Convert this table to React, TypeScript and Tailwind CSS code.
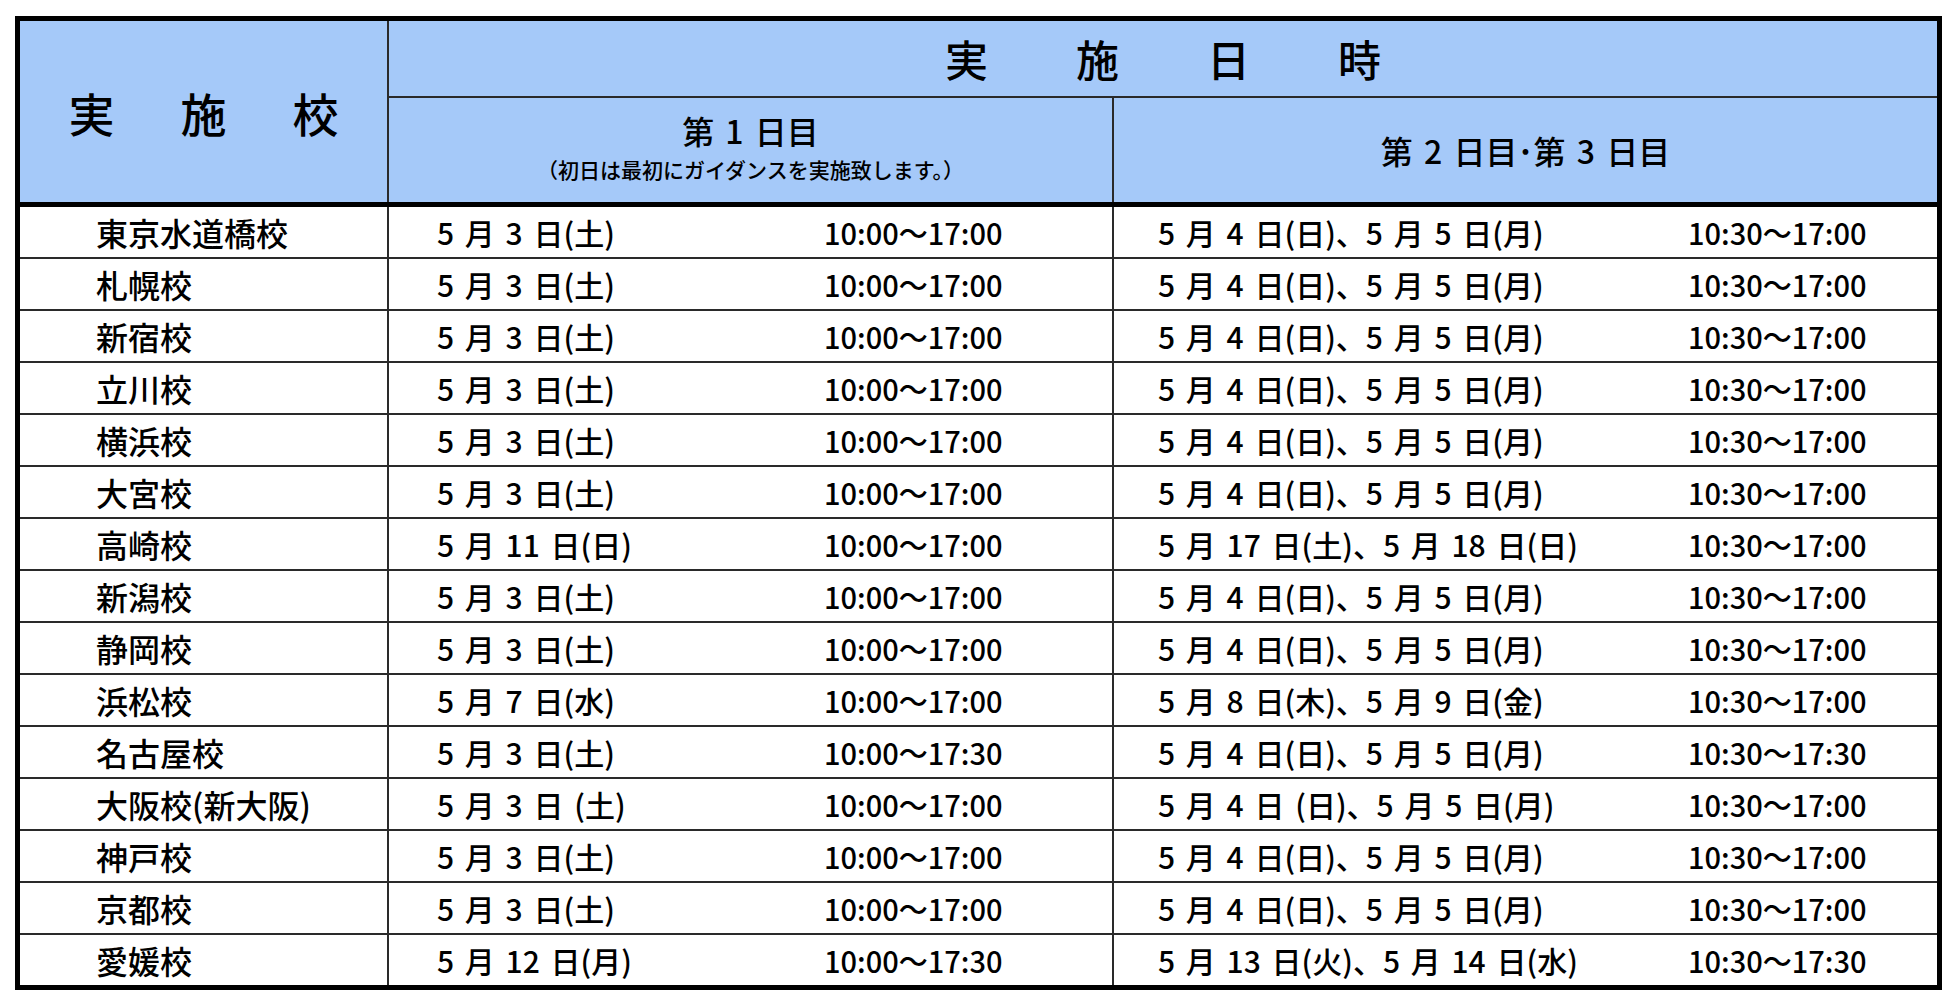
const rows = [
  ["東京水道橋校", "5 月 3 日(土)", "10:00〜17:00", "5 月 4 日(日)、5 月 5 日(月)", "10:30〜17:00"],
  ["札幌校", "5 月 3 日(土)", "10:00〜17:00", "5 月 4 日(日)、5 月 5 日(月)", "10:30〜17:00"],
  ["新宿校", "5 月 3 日(土)", "10:00〜17:00", "5 月 4 日(日)、5 月 5 日(月)", "10:30〜17:00"],
  ["立川校", "5 月 3 日(土)", "10:00〜17:00", "5 月 4 日(日)、5 月 5 日(月)", "10:30〜17:00"],
  ["横浜校", "5 月 3 日(土)", "10:00〜17:00", "5 月 4 日(日)、5 月 5 日(月)", "10:30〜17:00"],
  ["大宮校", "5 月 3 日(土)", "10:00〜17:00", "5 月 4 日(日)、5 月 5 日(月)", "10:30〜17:00"],
  ["高崎校", "5 月 11 日(日)", "10:00〜17:00", "5 月 17 日(土)、5 月 18 日(日)", "10:30〜17:00"],
  ["新潟校", "5 月 3 日(土)", "10:00〜17:00", "5 月 4 日(日)、5 月 5 日(月)", "10:30〜17:00"],
  ["静岡校", "5 月 3 日(土)", "10:00〜17:00", "5 月 4 日(日)、5 月 5 日(月)", "10:30〜17:00"],
  ["浜松校", "5 月 7 日(水)", "10:00〜17:00", "5 月 8 日(木)、5 月 9 日(金)", "10:30〜17:00"],
  ["名古屋校", "5 月 3 日(土)", "10:00〜17:30", "5 月 4 日(日)、5 月 5 日(月)", "10:30〜17:30"],
  ["大阪校(新大阪)", "5 月 3 日 (土)", "10:00〜17:00", "5 月 4 日 (日)、5 月 5 日(月)", "10:30〜17:00"],
  ["神戸校", "5 月 3 日(土)", "10:00〜17:00", "5 月 4 日(日)、5 月 5 日(月)", "10:30〜17:00"],
  ["京都校", "5 月 3 日(土)", "10:00〜17:00", "5 月 4 日(日)、5 月 5 日(月)", "10:30〜17:00"],
  ["愛媛校", "5 月 12 日(月)", "10:00〜17:30", "5 月 13 日(火)、5 月 14 日(水)", "10:30〜17:30"],
];

const line = "border-[#2a2a2a]";

const App = () => {
  return (
    <div className="w-[1956px] h-[1002px] bg-white pt-[16px] pl-[15px] font-['Noto_Sans_CJK_JP',sans-serif] font-medium text-black">
      <div className="w-[1927px] border-[5px] border-black">
        {/* header */}
        <div className="flex h-[186px] bg-[#a5c9f9] border-b-[5px] border-black">
          <div className={`w-[369px] shrink-0 border-r-2 ${line} flex items-center justify-center gap-[66px] text-[46px] leading-none`}>
            <span>実</span>
            <span>施</span>
            <span>校</span>
          </div>
          <div className="flex-1 flex flex-col">
            <div className={`h-[77px] border-b-2 ${line} flex items-center justify-center gap-[88px] text-[43px] leading-none`}>
              <span>実</span>
              <span>施</span>
              <span>日</span>
              <span>時</span>
            </div>
            <div className="flex-1 flex">
              <div className={`w-[725px] shrink-0 border-r-2 ${line} flex flex-col items-center justify-center pb-[6px]`}>
                <div className="text-[32px] leading-none [word-spacing:4px]">第 1 日目</div>
                <div className="text-[21px] leading-none mt-[13px]">（初日は最初にガイダンスを実施致します。）</div>
              </div>
              <div className="flex-1 flex items-center justify-center text-[32px] leading-none [word-spacing:4px]">第 2 日目･第 3 日目</div>
            </div>
          </div>
        </div>
        {/* body */}
        {rows.map((r, i) => (
          <div
            key={r[0]}
            className={`flex text-[30px] leading-none whitespace-nowrap ${i < rows.length - 1 ? `h-[52px] border-b-2 ${line}` : "h-[50px]"}`}
          >
            <div className={`w-[369px] shrink-0 border-r-2 ${line} flex items-center pl-[76px] text-[32px]`}>{r[0]}</div>
            <div className={`w-[725px] shrink-0 border-r-2 ${line} flex items-center`}>
              <span className="w-[435px] pl-[48px] [word-spacing:4px]">{r[1]}</span>
              <span className="text-[29px]">{r[2]}</span>
            </div>
            <div className="flex-1 flex items-center">
              <span className="w-[574px] pl-[44px] [word-spacing:4px]">{r[3]}</span>
              <span className="text-[29px]">{r[4]}</span>
            </div>
          </div>
        ))}
      </div>
    </div>
  );
};

export default App;
